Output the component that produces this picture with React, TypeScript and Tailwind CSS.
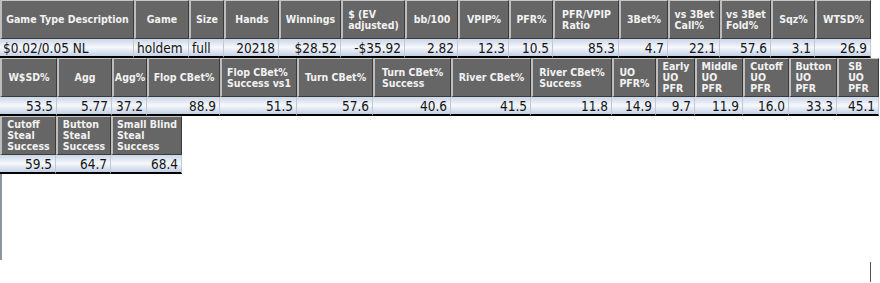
type Col = { h: string; v: string; w: string; left?: boolean };

const table1: Col[] = [
  { h: "Game Type Description", v: "$0.02/0.05 NL", w: "w-[134px]", left: true },
  { h: "Game", v: "holdem", w: "w-[55px]", left: true },
  { h: "Size", v: "full", w: "w-[35px]", left: true },
  { h: "Hands", v: "20218", w: "w-[55px]" },
  { h: "Winnings", v: "$28.52", w: "w-[62px]" },
  { h: "$ (EV\nadjusted)", v: "-$35.92", w: "w-[64px]" },
  { h: "bb/100", v: "2.82", w: "w-[53px]" },
  { h: "VPIP%", v: "12.3", w: "w-[51px]" },
  { h: "PFR%", v: "10.5", w: "w-[44px]" },
  { h: "PFR/VPIP\nRatio", v: "85.3", w: "w-[66px]" },
  { h: "3Bet%", v: "4.7", w: "w-[49px]" },
  { h: "vs 3Bet\nCall%", v: "22.1", w: "w-[52px]" },
  { h: "vs 3Bet\nFold%", v: "57.6", w: "w-[51px]" },
  { h: "Sqz%", v: "3.1", w: "w-[44px]" },
  { h: "WTSD%", v: "26.9", w: "w-[56px]" },
];

const table2: Col[] = [
  { h: "W$SD%", v: "53.5", w: "w-[57px]" },
  { h: "Agg", v: "5.77", w: "w-[55px]" },
  { h: "Agg%", v: "37.2", w: "w-[35px]" },
  { h: "Flop CBet%", v: "88.9", w: "w-[73px]" },
  { h: "Flop CBet%\nSuccess vs1", v: "51.5", w: "w-[77px]" },
  { h: "Turn CBet%", v: "57.6", w: "w-[76px]" },
  { h: "Turn CBet%\nSuccess", v: "40.6", w: "w-[78px]" },
  { h: "River CBet%", v: "41.5", w: "w-[80px]" },
  { h: "River CBet%\nSuccess", v: "11.8", w: "w-[81px]" },
  { h: "UO\nPFR%", v: "14.9", w: "w-[44px]" },
  { h: "Early\nUO\nPFR", v: "9.7", w: "w-[39px]" },
  { h: "Middle\nUO\nPFR", v: "11.9", w: "w-[48px]" },
  { h: "Cutoff\nUO\nPFR", v: "16.0", w: "w-[46px]" },
  { h: "Button\nUO\nPFR", v: "33.3", w: "w-[48px]" },
  { h: "SB\nUO\nPFR", v: "45.1", w: "w-[42px]" },
];

const table3: Col[] = [
  { h: "Cutoff\nSteal\nSuccess", v: "59.5", w: "w-[56px]" },
  { h: "Button\nSteal\nSuccess", v: "64.7", w: "w-[55px]" },
  { h: "Small Blind\nSteal\nSuccess", v: "68.4", w: "w-[71px]" },
];

function StatTable({ cols }: { cols: Col[] }) {
  return (
    <div className="flex font-['DejaVu_Sans_Condensed','DejaVu_Sans',Tahoma,sans-serif]">
      {cols.map((c, i) => (
        <div key={i} className={`${c.w} shrink-0 flex flex-col`}>
          {/* header cell */}
          <div className="h-[39px] flex items-center justify-center bg-[#666666] border-t border-l-2 border-r border-b border-t-[#c6c6c6] border-l-[#bdbdbd] border-r-[#3a3a3a] border-b-[#3a3a3a]">
            <span className="text-left whitespace-pre text-[10.5px] leading-[11px] font-bold text-[#f2f2f2]">
              {c.h}
            </span>
          </div>
          {/* value cell */}
          <div
            className={`h-[19px] px-[3px] flex items-center border-r border-r-[#c3c8d0] border-b-2 border-b-black bg-gradient-to-b from-[#cbd6e8] via-[#f6f8fc] to-[#c3d0e5] text-[13.5px] leading-[16px] text-[#141414] whitespace-nowrap overflow-hidden ${c.left ? "justify-start" : "justify-end"}`}
          >
            {c.v}
          </div>
        </div>
      ))}
    </div>
  );
}

export default function App() {
  return (
    <div className="w-[880px] h-[283px] bg-white overflow-hidden">
      <StatTable cols={table1} />
      <StatTable cols={table2} />
      <StatTable cols={table3} />
      <div className="w-[2px] h-[86px] bg-[#8a96a2]" />
      <div className="ml-[870px] w-px h-[20px] mt-[2px] bg-[#555]" />
    </div>
  );
}
